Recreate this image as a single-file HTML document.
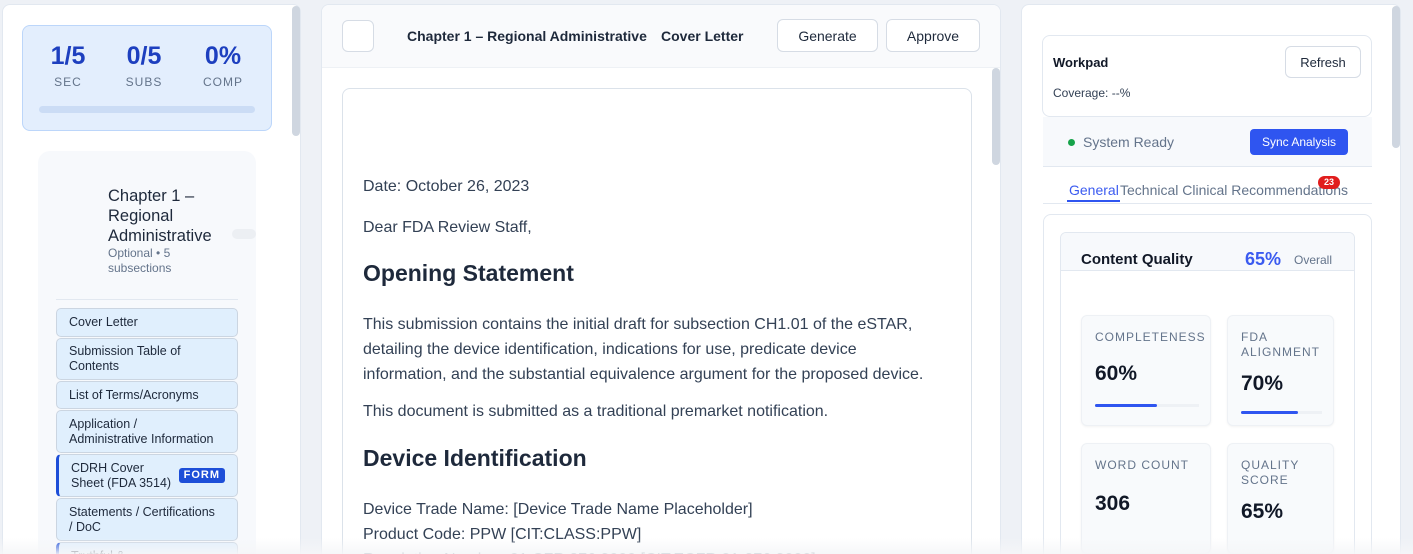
<!DOCTYPE html>
<html><head><style>
*{box-sizing:border-box;margin:0;padding:0}
html,body{width:1413px;height:554px;overflow:hidden}
body{background:#eef1f6;font-family:"Liberation Sans",Arial,sans-serif;color:#1e293b}
#root{position:relative;width:1413px;height:554px;overflow:hidden}
.a{position:absolute}
.panel{background:#fff;border:1px solid #e2e8f0;border-radius:8px}
.item{position:absolute;left:56px;width:182px;background:#e0effd;border:1px solid #cbd5e1;border-radius:5px;font-size:12.5px;color:#1e293b;padding:0 12px;line-height:15px;display:flex;align-items:center;white-space:nowrap}
.btn{position:absolute;background:#fff;border:1px solid #d6dce5;border-radius:6px;font-size:14px;display:flex;align-items:center;justify-content:center;color:#1e293b}
.doc p{position:absolute;left:363px;font-size:16px;color:#334155;white-space:nowrap}
.tile{position:absolute;background:#f8fafc;border:1px solid #eef1f5;border-radius:6px;box-shadow:0 1px 2px rgba(0,0,0,.05)}
.tl{position:absolute;left:13px;top:14px;font-size:12px;letter-spacing:1px;color:#64748b;line-height:15px}
.tv{position:absolute;left:13px;font-size:21px;font-weight:bold;color:#111827}
</style></head><body><div id="root">
<!-- left -->
<div class="a panel" style="left:2px;top:4px;width:299px;height:560px"></div>
<div class="a" style="left:292px;top:6px;width:8px;height:130px;background:#cfd6e0;border-radius:4px"></div>
<div class="a" style="left:22px;top:25px;width:250px;height:106px;background:#e3eefd;border:1px solid #bcd6fa;border-radius:8px"></div>
<div class="a" style="left:40px;top:42px;width:56px;text-align:center;font-size:25px;font-weight:bold;color:#1d3fbf">1/5</div>
<div class="a" style="left:116px;top:42px;width:56px;text-align:center;font-size:25px;font-weight:bold;color:#1d3fbf">0/5</div>
<div class="a" style="left:195px;top:42px;width:56px;text-align:center;font-size:25px;font-weight:bold;color:#1d3fbf">0%</div>
<div class="a" style="left:40px;top:75px;width:56px;text-align:center;font-size:12px;letter-spacing:1px;color:#64748b">SEC</div>
<div class="a" style="left:116px;top:75px;width:56px;text-align:center;font-size:12px;letter-spacing:1px;color:#64748b">SUBS</div>
<div class="a" style="left:195px;top:75px;width:56px;text-align:center;font-size:12px;letter-spacing:1px;color:#64748b">COMP</div>
<div class="a" style="left:39px;top:106px;width:216px;height:7px;background:#cbdcf5;border-radius:4px"></div>
<div class="a" style="left:38px;top:151px;width:218px;height:420px;background:#f7f9fc;border-radius:12px"></div>
<div class="a" style="left:108px;top:186px;font-size:16.5px;line-height:20px;color:#1e293b">Chapter 1 –<br>Regional<br>Administrative</div>
<div class="a" style="left:108px;top:246px;font-size:12px;line-height:15px;color:#64748b">Optional • 5<br>subsections</div>
<div class="a" style="left:232px;top:229px;width:24px;height:10px;background:#eceff3;border-radius:5px"></div>
<div class="a" style="left:56px;top:299px;width:182px;height:1px;background:#e2e8f0"></div>
<div class="item" style="top:308px;height:29px">Cover Letter</div>
<div class="item" style="top:338px;height:42px">Submission Table of<br>Contents</div>
<div class="item" style="top:381px;height:28px">List of Terms/Acronyms</div>
<div class="item" style="top:410px;height:43px">Application /<br>Administrative Information</div>
<div class="item" style="top:454px;height:43px;border-left:3px solid #1d4ed8;justify-content:space-between"><span>CDRH Cover<br>Sheet (FDA 3514)</span><span style="background:#1d4ed8;color:#fff;font-size:11px;font-weight:bold;letter-spacing:1px;padding:0 5px;border-radius:3px;line-height:15px">FORM</span></div>
<div class="item" style="top:498px;height:43px">Statements / Certifications<br>/ DoC</div>
<div class="item" style="top:542px;height:30px;border-left:3px solid #1d4ed8;align-items:flex-start;padding-top:6px">Truthful &amp;</div>
<!-- middle -->
<div class="a panel" style="left:321px;top:4px;width:680px;height:560px;overflow:hidden">
<div style="height:63px;background:#f9fafc;border-bottom:1px solid #eef1f5"></div></div>
<div class="a" style="left:342px;top:20px;width:32px;height:32px;background:#fff;border:1px solid #d6dce5;border-radius:6px"></div>
<div class="a" style="left:407px;top:28px;font-size:14px;font-weight:bold;color:#1e293b">Chapter 1 – Regional Administrative</div>
<div class="a" style="left:661px;top:28px;font-size:14px;font-weight:bold;color:#1e293b">Cover Letter</div>
<div class="btn" style="left:777px;top:19px;width:101px;height:33px">Generate</div>
<div class="btn" style="left:886px;top:19px;width:94px;height:33px">Approve</div>
<div class="a" style="left:992px;top:68px;width:8px;height:97px;background:#cfd6e0;border-radius:4px"></div>
<div class="a" style="left:342px;top:88px;width:630px;height:480px;background:#fff;border:1px solid #dbe2ea;border-radius:8px"></div>
<div class="doc">
<p style="top:178px">Date: October 26, 2023</p>
<p style="top:219px">Dear FDA Review Staff,</p>
<p style="top:260px;font-size:23px;font-weight:bold;color:#1e293b">Opening Statement</p>
<p style="top:312px;line-height:25px">This submission contains the initial draft for subsection CH1.01 of the eSTAR,<br>detailing the device identification, indications for use, predicate device<br>information, and the substantial equivalence argument for the proposed device.</p>
<p style="top:403px">This document is submitted as a traditional premarket notification.</p>
<p style="top:445px;font-size:23px;font-weight:bold;color:#1e293b">Device Identification</p>
<p style="top:497px;line-height:25px">Device Trade Name: [Device Trade Name Placeholder]<br>Product Code: PPW [CIT:CLASS:PPW]<br>Regulation Number: 21 CFR 876.3000 [CIT:ECFR:21-876.3000]</p>
</div>
<!-- right -->
<div class="a panel" style="left:1021px;top:4px;width:380px;height:560px"></div>
<div class="a" style="left:1392px;top:6px;width:8px;height:142px;background:#cfd6e0;border-radius:4px"></div>
<div class="a" style="left:1042px;top:35px;width:330px;height:82px;background:#fff;border:1px solid #e2e8f0;border-radius:8px"></div>
<div class="a" style="left:1053px;top:55px;font-size:13px;font-weight:bold;color:#111827">Workpad</div>
<div class="a" style="left:1053px;top:86px;font-size:12px;color:#334155">Coverage: --%</div>
<div class="btn" style="left:1285px;top:46px;width:76px;height:32px;font-size:13px">Refresh</div>
<div class="a" style="left:1043px;top:117px;width:329px;height:50px;background:#f7f9fc;border-bottom:1px solid #e2e8f0"></div>
<div class="a" style="left:1068px;top:139px;width:7px;height:7px;border-radius:50%;background:#16a34a"></div>
<div class="a" style="left:1083px;top:134px;font-size:14px;color:#64748b">System Ready</div>
<div class="a" style="left:1250px;top:129px;width:98px;height:26px;background:#2f55f0;border-radius:4px;color:#fff;font-size:12px;display:flex;align-items:center;justify-content:center">Sync Analysis</div>
<div class="a" style="left:1069px;top:182px;font-size:14px;color:#3b5bf0">General</div>
<div class="a" style="left:1120px;top:182px;font-size:14px;color:#64748b">Technical Clinical Recommendations</div>
<div class="a" style="left:1318px;top:176px;width:22px;height:13px;background:#e11d1d;border-radius:7px;color:#fff;font-size:9px;font-weight:bold;text-align:center;line-height:13px">23</div>
<div class="a" style="left:1067px;top:200px;width:53px;height:2px;background:#2f55f0"></div>
<div class="a" style="left:1043px;top:203px;width:329px;height:1px;background:#e2e8f0"></div>
<div class="a" style="left:1043px;top:214px;width:329px;height:360px;background:#fff;border:1px solid #e2e8f0;border-radius:8px"></div>
<div class="a" style="left:1060px;top:232px;width:295px;height:340px;background:#fff;border:1px solid #e2e8f0;border-radius:6px;overflow:hidden"><div style="height:38px;background:#f7f9fc;border-bottom:1px solid #e2e8f0"></div></div>
<div class="a" style="left:1081px;top:251px;font-size:15px;font-weight:bold;color:#111827">Content Quality</div>
<div class="a" style="left:1245px;top:249px;font-size:18px;font-weight:bold;color:#3b5bf0">65%</div>
<div class="a" style="left:1294px;top:253px;font-size:12px;color:#64748b">Overall</div>
<div class="tile" style="left:1081px;top:315px;width:130px;height:111px"><div class="tl">COMPLETENESS</div><div class="tv" style="top:46px">60%</div><div class="a" style="left:13px;top:88px;width:104px;height:3px;background:#eef1f5"><div style="width:62px;height:3px;background:#2f55f0;border-radius:2px"></div></div></div>
<div class="tile" style="left:1227px;top:315px;width:107px;height:111px"><div class="tl">FDA<br>ALIGNMENT</div><div class="tv" style="top:56px">70%</div><div class="a" style="left:13px;top:95px;width:81px;height:3px;background:#eef1f5"><div style="width:57px;height:3px;background:#2f55f0;border-radius:2px"></div></div></div>
<div class="tile" style="left:1081px;top:443px;width:130px;height:111px"><div class="tl">WORD COUNT</div><div class="tv" style="top:48px">306</div></div>
<div class="tile" style="left:1227px;top:443px;width:107px;height:111px"><div class="tl">QUALITY<br>SCORE</div><div class="tv" style="top:56px">65%</div></div>
<div class="a" style="left:0;top:538px;width:1413px;height:16px;background:linear-gradient(rgba(255,255,255,0),rgba(245,246,248,.9))"></div>
</div></body></html>
